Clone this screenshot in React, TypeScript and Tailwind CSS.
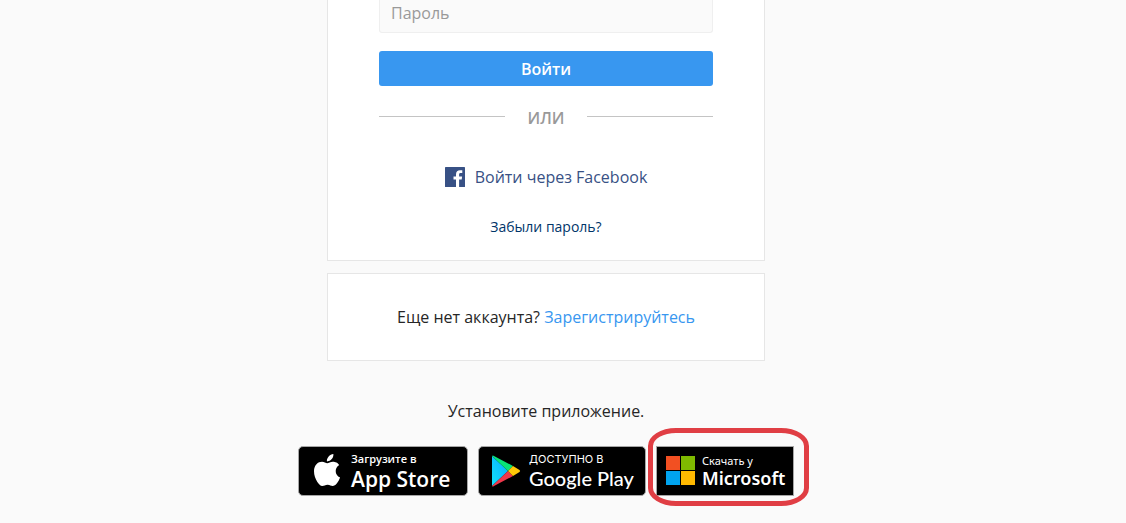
import type { ReactNode } from 'react';

function AppleLogo() {
  return (
    <svg viewBox="0 0 814 1000" className="mb-0.5 h-8 w-[26px] shrink-0" fill="#fff" aria-hidden="true">
      <path d="M788.1 340.9c-5.800 4.500-108.200 62.200-108.200 190.500 0 148.400 130.300 200.900 134.200 202.200-.6 3.200-20.700 71.900-68.700 141.900-42.800 61.600-87.500 123.100-155.500 123.100s-85.500-39.500-164-39.500c-76.500 0-103.700 40.800-165.900 40.800s-105.600-57-155.500-127C46.700 790.700 0 663 0 541.800c0-194.400 126.400-297.500 250.800-297.500 66.100 0 121.200 43.400 162.700 43.400 39.500 0 101.100-46 176.300-46 28.500 0 130.900 2.600 198.300 99.200zm-234-181.500c31.100-36.900 53.100-88.100 53.100-139.300 0-7.100-.6-14.300-1.900-20.100-50.600 1.900-110.800 33.700-147.100 75.800-28.500 32.400-55.100 83.600-55.100 135.500 0 7.800 1.300 15.600 1.900 18.100 3.200.6 8.400 1.300 13.600 1.300 45.400 0 102.500-30.400 135.500-71.300z" />
    </svg>
  );
}

function PlayLogo() {
  return (
    <svg viewBox="0 0 30 34" className="h-[34px] w-[30px] shrink-0" aria-hidden="true">
      <defs>
        <linearGradient id="play-blue" x1="1" y1="0" x2="0" y2="1">
          <stop offset="0" stopColor="#08aaff" />
          <stop offset="1" stopColor="#12e0fa" />
        </linearGradient>
      </defs>
      <path d="M1 2v30l16-15z" fill="url(#play-blue)" />
      <path d="M1 2q.8-1 2 0l19 10-5 5z" fill="#08e477" />
      <path d="M1 32q.8 1 2 0l19-10-5-5z" fill="#f0374b" />
      <path d="m22 12 6.500 4q1.200 1 0 2L22 22l-5-5z" fill="#ffc807" />
    </svg>
  );
}

function MicrosoftLogo() {
  return (
    <svg viewBox="0 0 29 29" className="mb-0.5 size-[29px] shrink-0" aria-hidden="true">
      <path d="M0 0h14v14H0z" fill="#f25022" />
      <path d="M15 0h14v14H15z" fill="#7fba00" />
      <path d="M0 15h14v14H0z" fill="#00a4ef" />
      <path d="M15 15h14v14H15z" fill="#ffb900" />
    </svg>
  );
}

function FacebookLogo() {
  return (
    <svg viewBox="0 0 20 20" className="size-5 shrink-0" aria-hidden="true">
      <rect width="20" height="20" rx="0.600" fill="#385185" />
      <path d="M11 20v-7.500H8.500V9.500H11V7.300c0-2.700 1.600-4.100 4-4.100l2.300.1V6h-1.600c-1.300 0-1.600.6-1.600 1.500v2h3l-.4 3h-2.600V20z" fill="#fff" />
    </svg>
  );
}

function StoreBadge({ className, children }: { className: string; children: ReactNode }) {
  return (
    <a href="#" className={`flex h-[50px] items-center bg-black text-white ${className}`}>
      {children}
    </a>
  );
}

export default function App() {
  return (
    <main className="flex min-h-screen flex-col items-center bg-[#fafafa] pr-[34px] font-['Open_Sans','Noto_Sans',sans-serif] text-base text-[#262626]">
      <section className="w-full max-w-[438px] border border-t-0 border-[#e6e6e6] bg-white px-[51px] pb-[23px]">
        <form className="flex flex-col" onSubmit={(event) => event.preventDefault()}>
          <input
            type="password"
            aria-label="Пароль"
            placeholder="Пароль"
            className="h-[33px] rounded-b-[3px] border border-t-0 border-[#efefef] bg-[#fafafa] px-[11px] pb-1.5 outline-none placeholder:text-[#999999]"
          />
          <button type="submit" className="mt-[18px] h-[35px] rounded-[3px] bg-[#3897f0] font-semibold text-white">
            Войти
          </button>
          <div className="mt-5 flex h-6 items-center gap-[23px] font-semibold text-[#999999]">
            <span className="mb-1 h-px flex-1 bg-[#c4c4c4]" />
            <span className="uppercase">или</span>
            <span className="mb-1 h-px flex-1 bg-[#c4c4c4]" />
          </div>
          <a href="#" className="mt-[35px] flex h-6 items-center justify-center gap-2.5 text-[#385185]">
            <FacebookLogo />
            Войти через Facebook
          </a>
          <a href="#" className="mt-7 text-center text-sm text-[#003569]">
            Забыли пароль?
          </a>
        </form>
      </section>
      <section className="mt-3 flex h-[88px] w-full max-w-[438px] items-center justify-center border border-[#e6e6e6] bg-white">
        <p>
          Еще нет аккаунта?{' '}
          <a href="#" className="text-[#3897f0]">Зарегистрируйтесь</a>
        </p>
      </section>
      <p className="mt-[38px]">Установите приложение.</p>
      <div className="mt-[23px] flex gap-2.5">
        <StoreBadge className="w-[170px] gap-[11px] rounded-[5px] border border-[#a6a6a6] pl-[15px]">
          <AppleLogo />
          <span className="flex flex-col">
            <span className="text-[11px] leading-4 font-semibold">Загрузите в</span>
            <span className="text-[21px] leading-6 font-semibold">App Store</span>
          </span>
        </StoreBadge>
        <StoreBadge className="w-[168px] gap-2 rounded-[5px] border border-[#a6a6a6] pl-3">
          <PlayLogo />
          <span className="flex flex-col">
            <span className="font-['Inter','Noto_Sans',sans-serif] text-[11px] leading-[14px]">ДОСТУПНО В</span>
            <span className="font-['Lato','Noto_Sans',sans-serif] text-[20px] leading-6 font-medium">Google Play</span>
          </span>
        </StoreBadge>
        <div className="relative">
          <StoreBadge className="w-[138px] gap-[7px] border border-[#a6a6a6] pl-[9px]">
            <MicrosoftLogo />
            <span className="flex flex-col font-['Noto_Sans',sans-serif]">
              <span className="text-[11px] leading-[14px]">Скачать у</span>
              <span className="text-[18px] leading-5 font-semibold">Microsoft</span>
            </span>
          </StoreBadge>
          <span className="pointer-events-none absolute -top-[18px] -right-[15px] -bottom-2.5 -left-2 rounded-[28px/18px] border-[5px] border-[#e03e44]" />
        </div>
      </div>
    </main>
  );
}
